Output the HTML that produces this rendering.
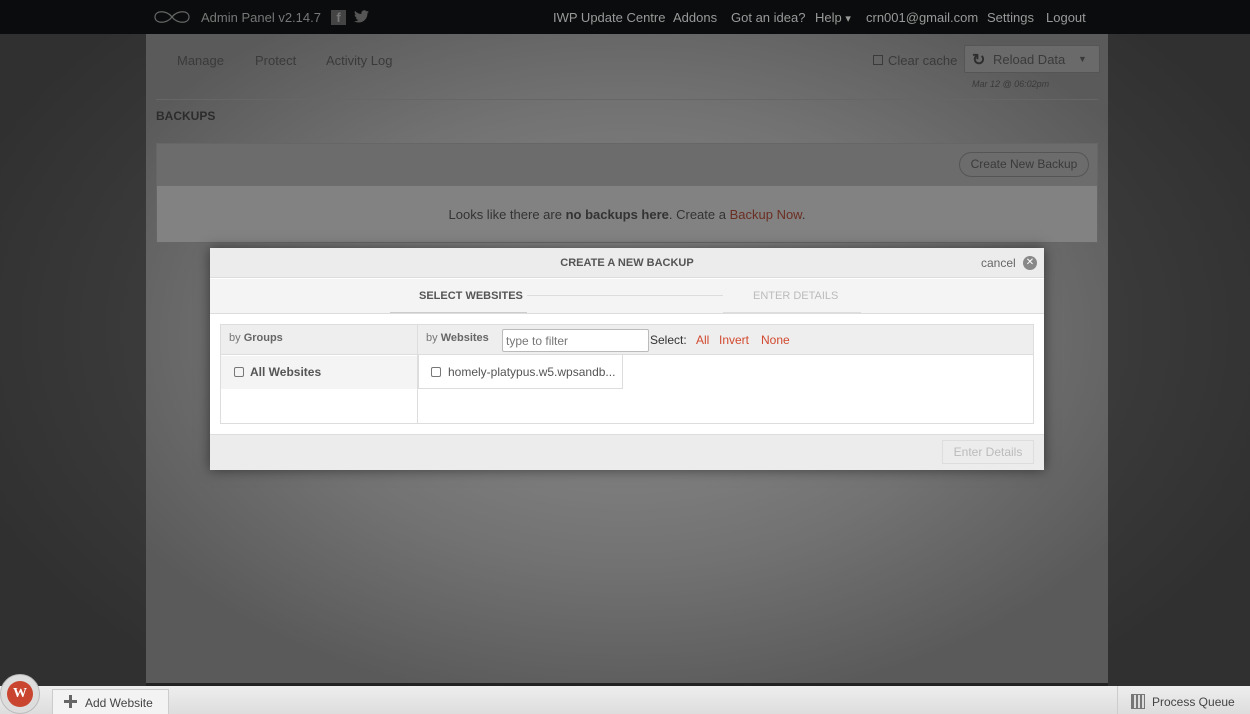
<!DOCTYPE html>
<html><head><meta charset="utf-8"><style>
*{box-sizing:border-box;margin:0;padding:0}
body{width:1250px;height:714px;overflow:hidden;position:relative;font-family:"Liberation Sans",sans-serif;background:#393939}
.a{position:absolute}
#side{left:0;top:0;width:1250px;height:714px;background:radial-gradient(ellipse 700px 450px at 625px 330px,#5a5a5a,#3a3a3a 70%,#303030)}
#content{left:146px;top:34px;width:962px;height:650px;background:radial-gradient(ellipse 650px 420px at 480px 300px,#8e8e8e,#727272 55%,#5a5a5a 90%)}
#top{left:0;top:0;width:1250px;height:34px;background:#0b0c0d;color:#8a8a8a;font-size:13px}
#top span{position:absolute;top:10px}
.nav{color:#3a3a3a;font-size:13px}
.modal{left:210px;top:248px;width:834px;height:222px;background:#fff;box-shadow:0 0 12px rgba(0,0,0,.5)}
.red{color:#d2492f}
</style></head><body>
<div class="a" id="side"></div>
<div class="a" id="content"></div>
<div class="a" id="top">
<svg class="a" style="left:151px;top:7px" width="42" height="20"><path d="M21 10C16 3 4 3 4 10s12 7 17 0 17-7 17 0-12 7-17 0z" fill="none" stroke="#666" stroke-width="1.2"/></svg>
<span style="left:201px;color:#777">Admin Panel v2.14.7</span>
<div class="a" style="left:331px;top:10px;width:15px;height:15px;background:#444;color:#777;font-size:13px;text-align:center;line-height:16px;font-weight:bold">f</div>
<svg class="a" style="left:354px;top:10px" width="15" height="13" viewBox="0 0 24 20"><path d="M24 2.5c-.9.4-1.8.7-2.8.8 1-.6 1.8-1.6 2.2-2.7-1 .6-2 1-3.1 1.2C19.3.7 18 0 16.6 0c-2.7 0-4.9 2.2-4.9 4.9 0 .4 0 .8.1 1.1C7.7 5.8 4.1 3.9 1.7.9c-.4.7-.7 1.6-.7 2.5 0 1.7.9 3.2 2.2 4.1-.8 0-1.6-.2-2.2-.6v.1c0 2.4 1.7 4.4 3.9 4.8-.4.1-.8.2-1.3.2-.3 0-.6 0-.9-.1.6 2 2.4 3.4 4.6 3.4-1.7 1.3-3.8 2.1-6.1 2.1-.4 0-.8 0-1.2-.1 2.2 1.4 4.8 2.2 7.5 2.2 9.1 0 14-7.5 14-14v-.6c1-.7 1.8-1.6 2.5-2.5z" fill="#555"/></svg>
<span style="left:553px;color:#999">IWP Update Centre</span>
<span style="left:673px;color:#999">Addons</span>
<span style="left:731px;color:#999">Got an idea?</span>
<span style="left:815px;color:#999">Help <small>▾</small></span>
<span style="left:866px;color:#999">crn001@gmail.com</span>
<span style="left:987px;color:#999">Settings</span>
<span style="left:1046px;color:#999">Logout</span>
</div>
<div class="a nav" style="left:177px;top:53px">Manage</div>
<div class="a nav" style="left:255px;top:53px">Protect</div>
<div class="a nav" style="left:326px;top:53px">Activity Log</div>
<div class="a" style="left:873px;top:55px;width:10px;height:10px;border:1px solid #3a3a3a"></div>
<div class="a nav" style="left:888px;top:53px">Clear cache</div>
<div class="a" style="left:964px;top:45px;width:136px;height:28px;border:1px solid #555;background:#6a6a6a;border-radius:2px"></div>
<div class="a" style="left:972px;top:50px;font-size:16px;font-weight:bold;color:#2e2e2e">↻</div>
<div class="a nav" style="left:993px;top:52px">Reload Data</div>
<div class="a nav" style="left:1078px;top:54px;font-size:9px">▼</div>
<div class="a" style="left:972px;top:79px;font-size:9px;font-style:italic;color:#3a3a3a">Mar 12 @ 06:02pm</div>
<div class="a" style="left:156px;top:99px;width:942px;border-top:1px solid #666"></div>
<div class="a" style="left:156px;top:109px;font-size:12px;font-weight:bold;color:#2c2c2c">BACKUPS</div>
<div class="a" style="left:156px;top:143px;width:942px;height:100px;border:1px solid #666;background:#828282"></div>
<div class="a" style="left:157px;top:144px;width:940px;height:42px;background:#6c6c6c"></div>
<div class="a" style="left:959px;top:152px;width:130px;height:25px;border:1px solid #555;border-radius:13px;font-size:12px;color:#3a3a3a;text-align:center;line-height:23px">Create New Backup</div>
<div class="a" style="left:156px;top:207px;width:942px;text-align:center;font-size:13px;color:#333">Looks like there are <b>no backups here</b>. Create a <span style="color:#6b2e22">Backup Now</span>.</div>

<div class="a modal">
<div class="a" style="left:0;top:0;width:834px;height:30px;background:#ececec;border-bottom:1px solid #ddd"></div>
<div class="a" style="left:0;top:9px;width:834px;text-align:center;font-size:11px;font-weight:bold;color:#555">CREATE A NEW BACKUP</div>
<div class="a" style="left:771px;top:8px;font-size:12px;color:#666">cancel</div>
<div class="a" style="left:813px;top:8px;width:14px;height:14px;border-radius:50%;background:#888;color:#fff;font-size:10px;text-align:center;line-height:14px">✕</div>
<div class="a" style="left:0;top:31px;width:834px;height:35px;background:#f4f4f4;border-bottom:1px solid #ddd"></div>
<div class="a" style="left:209px;top:42px;font-size:11px;font-weight:bold;color:#555">SELECT WEBSITES</div>
<div class="a" style="left:180px;top:64px;width:137px;border-top:1px solid #ccc"></div>
<div class="a" style="left:317px;top:47px;width:196px;border-top:1px solid #ddd"></div>
<div class="a" style="left:543px;top:42px;font-size:11px;color:#bbb">ENTER DETAILS</div>
<div class="a" style="left:513px;top:64px;width:138px;border-top:1px solid #ddd"></div>
<div class="a" style="left:10px;top:76px;width:814px;height:100px;border:1px solid #ddd"></div>
<div class="a" style="left:11px;top:77px;width:812px;height:30px;background:#eee;border-bottom:1px solid #ddd"></div>
<div class="a" style="left:207px;top:77px;width:1px;height:98px;background:#ddd"></div>
<div class="a" style="left:19px;top:84px;font-size:11px;color:#777">by <b style="color:#666">Groups</b></div>
<div class="a" style="left:11px;top:108px;width:196px;height:33px;background:#f4f4f4"></div>
<div class="a" style="left:24px;top:119px;width:10px;height:10px;border:1px solid #777;border-radius:2px"></div>
<div class="a" style="left:40px;top:117px;font-size:12px;font-weight:bold;color:#555">All Websites</div>
<div class="a" style="left:216px;top:84px;font-size:11px;color:#777">by <b style="color:#666">Websites</b></div>
<div class="a" style="left:292px;top:81px;width:147px;height:23px;border:1px solid #bbb;border-radius:2px;font-size:12px;color:#777;padding:4px 3px;background:#fff">type to filter</div>
<div class="a" style="left:440px;top:85px;font-size:12px;color:#333">Select:</div>
<div class="a red" style="left:486px;top:85px;font-size:12px">All</div>
<div class="a red" style="left:509px;top:85px;font-size:12px">Invert</div>
<div class="a red" style="left:551px;top:85px;font-size:12px">None</div>
<div class="a" style="left:208px;top:107px;width:205px;height:34px;border:1px solid #ddd;border-top:0"></div>
<div class="a" style="left:221px;top:119px;width:10px;height:10px;border:1px solid #777;border-radius:2px"></div>
<div class="a" style="left:238px;top:117px;font-size:12px;color:#555">homely-platypus.w5.wpsandb...</div>
<div class="a" style="left:0;top:186px;width:834px;height:36px;background:#ececec;border-top:1px solid #ddd"></div>
<div class="a" style="left:732px;top:192px;width:92px;height:24px;border:1px solid #ddd;font-size:12px;color:#bbb;text-align:center;line-height:22px">Enter Details</div>
</div>

<div class="a" style="left:146px;top:683px;width:962px;height:3px;background:#222"></div>
<div class="a" style="left:0;top:686px;width:1250px;height:28px;background:linear-gradient(#eee,#ddd)"></div>
<div class="a" style="left:0;top:674px;width:40px;height:40px;border-radius:50%;background:#ddd;border:1px solid #bbb"></div>
<div class="a" style="left:7px;top:681px;width:26px;height:26px;border-radius:50%;background:#c9452f;color:#fff;font-size:14px;text-align:center;line-height:26px;font-weight:bold;font-family:'Liberation Serif',serif">W</div>
<div class="a" style="left:52px;top:689px;width:117px;height:25px;background:#f3f3f3;border:1px solid #ccc;border-bottom:0"></div>
<div class="a" style="left:64px;top:695px;width:13px;height:13px;background:linear-gradient(#666,#666) center/13px 3px no-repeat,linear-gradient(#666,#666) center/3px 13px no-repeat"></div>
<div class="a" style="left:85px;top:696px;font-size:12px;color:#444">Add Website</div>
<div class="a" style="left:1117px;top:686px;width:133px;height:28px;border-left:1px solid #ccc"></div>
<div class="a" style="left:1131px;top:694px;width:14px;height:15px;border:1px solid #777;background:repeating-linear-gradient(90deg,#777 0 2px,#ddd 2px 4px)"></div>
<div class="a" style="left:1152px;top:695px;font-size:12px;color:#444">Process Queue</div>
</body></html>
